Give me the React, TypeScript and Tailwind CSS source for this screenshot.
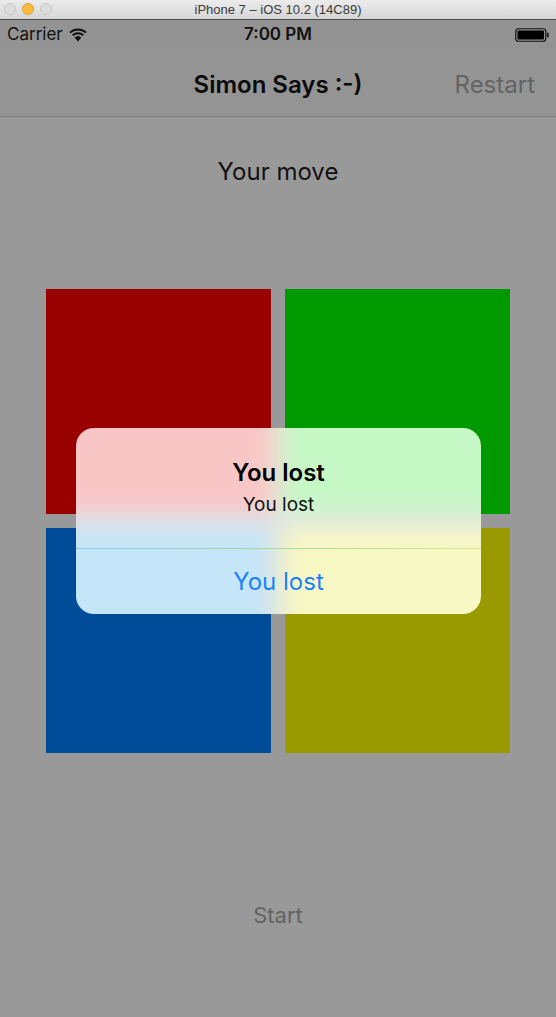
const font = { fontFamily: 'Inter, "Noto Sans", sans-serif' }

function TitleBar() {
  return (
    <div className="relative flex h-[20px] items-center justify-center border-b border-[#4a4a4a] bg-gradient-to-b from-[#ececec] to-[#d6d6d6]">
      <div className="absolute left-[4px] top-[3px] flex gap-[6px]">
        <span className="h-[12px] w-[12px] rounded-full border border-[#c6c6c6] bg-[#dcdcdc]" />
        <span className="h-[12px] w-[12px] rounded-full border border-[#dca23a] bg-[#fdbc40]" />
        <span className="h-[12px] w-[12px] rounded-full border border-[#c6c6c6] bg-[#dcdcdc]" />
      </div>
      <span className="text-[13px] text-[#3a3a3a]" style={{ fontFamily: '"Liberation Sans", sans-serif' }}>
        iPhone 7 – iOS 10.2 (14C89)
      </span>
    </div>
  )
}

// iOS style wifi fan
function WifiIcon() {
  return (
    <svg width="18" height="14" viewBox="0 0 18 14">
      <path d="M9 13.5 L5.6 9.6 A5 5 0 0 1 12.4 9.6 Z" fill="#111" />
      <path d="M3.6 7.4 A7.8 7.8 0 0 1 14.4 7.4" fill="none" stroke="#111" strokeWidth="2" />
      <path d="M1 4.6 A11.6 11.6 0 0 1 17 4.6" fill="none" stroke="#111" strokeWidth="2" />
    </svg>
  )
}

function StatusBar() {
  return (
    <div className="relative flex h-[30px] items-center justify-between bg-[#939393] px-[7px]">
      <div className="flex items-center gap-[6px] text-[17px] text-[#111]">
        <span>Carrier</span>
        <WifiIcon />
      </div>
      <span className="absolute left-0 right-0 text-center text-[17px] font-semibold text-[#111]">7:00 PM</span>
      <svg width="34" height="14" viewBox="0 0 34 14">
        <rect x="0.75" y="0.75" width="30" height="12.5" rx="2.5" fill="none" stroke="#111" strokeWidth="1.2" />
        <rect x="2.5" y="2.5" width="26.5" height="9" rx="1" fill="#000" />
        <rect x="32" y="4.5" width="1.6" height="5" rx="0.8" fill="#111" />
      </svg>
    </div>
  )
}

function NavBar() {
  return (
    <div className="relative flex h-[67px] items-center justify-end border-b border-[#7e7e7e] bg-[#949494] pt-[4px] pr-[21px]">
      <span className="absolute left-0 right-0 text-center text-[24px] font-semibold text-[#0a0a0a]">Simon Says :-)</span>
      <span className="relative text-[24px] text-[#636363]">Restart</span>
    </div>
  )
}

function Alert() {
  return (
    <div className="absolute left-[30px] top-[139px] h-[186px] w-[405px] overflow-hidden rounded-[18px]">
      {/* blurred backdrop */}
      <div className="absolute -inset-[24px] blur-[11px]">
        <div className="absolute left-0 top-0 h-[109px] w-[219px] bg-[#f9c6c6]" />
        <div className="absolute left-[233px] top-0 h-[109px] w-[220px] bg-[#c6f8c6]" />
        <div className="absolute left-0 top-[123px] h-[111px] w-[219px] bg-[#c5e5f8]" />
        <div className="absolute left-[233px] top-[123px] h-[111px] w-[220px] bg-[#f8f8c5]" />
        <div className="absolute left-[219px] top-0 h-full w-[14px] bg-[#e6e6d6]" />
        <div className="absolute left-0 top-[109px] h-[14px] w-full bg-[#e0e4e8]" />
      </div>
      <div className="relative flex h-full flex-col">
        <div className="flex flex-col items-center pt-[31px] pb-[32px]">
          <span className="text-[24px] font-semibold leading-[28px] text-black">You lost</span>
          <span className="mt-[7px] text-[19px] leading-[22px] text-[#111]">You lost</span>
        </div>
        <div className="h-px bg-gradient-to-r from-[#8ccaf2] via-[#a8d8a0] to-[#d6e890]" />
        <div className="flex flex-1 items-center justify-center text-[24px] text-[#1a82fb]">You lost</div>
      </div>
    </div>
  )
}

export default function App() {
  return (
    <div className="flex h-[1017px] w-[556px] flex-col overflow-hidden bg-[#999999]" style={font}>
      <TitleBar />
      <StatusBar />
      <NavBar />
      <div className="flex flex-col items-center">
        <p className="mt-[41px] text-[24px] leading-[28px] text-[#111]">Your move</p>
        <div className="relative mt-[103px] grid w-[464px] grid-cols-2 gap-[14px]">
          <div className="h-[225px] bg-[#990000]" />
          <div className="h-[225px] bg-[#009900]" />
          <div className="h-[225px] bg-[#004c99]" />
          <div className="h-[225px] bg-[#999900]" />
          <Alert />
        </div>
        <p className="mt-[149px] text-[22px] leading-[26px] text-[#636363]">Start</p>
      </div>
    </div>
  )
}
